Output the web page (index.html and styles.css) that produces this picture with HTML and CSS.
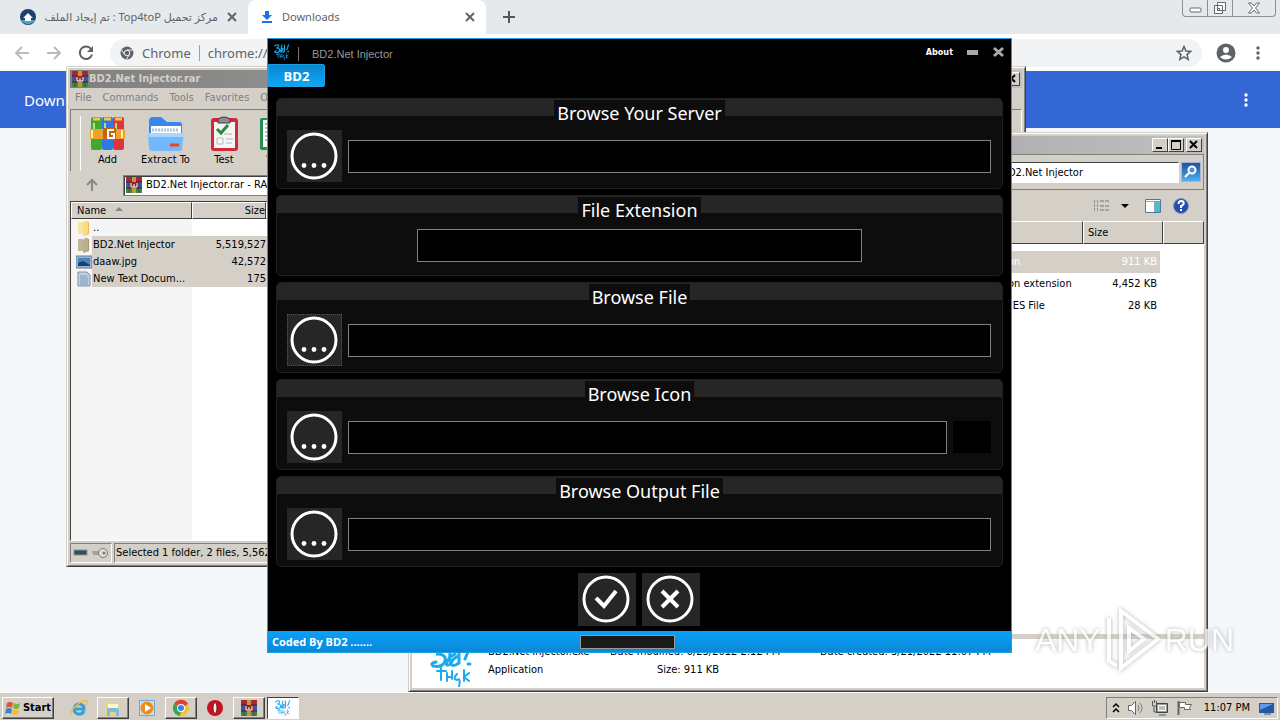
FILE: index.html
```
<!DOCTYPE html>
<html lang="en">
<head>
    <meta charset="UTF-8">
    <meta name="viewport" content="width=device-width, initial-scale=1.0">
    <title>BD2.Net Injector</title>
    <link rel="stylesheet" href="styles.css">
</head>
<body>
    <!-- shared icons -->
    <svg class="sprite" aria-hidden="true">
        <symbol id="rar" viewBox="0 0 16 16">
            <rect width="16" height="5" fill="#b3262e"/>
            <rect y="5" width="16" height="6" fill="#2c5fb5"/>
            <rect y="11" width="16" height="5" fill="#2c9140"/>
            <path d="M0 5h16M0 11h16" stroke="#381a30"/>
            <path d="M3 0v16M13 0v16" stroke="#73304c"/>
            <rect x="6" width="4" height="16" fill="#c7963c"/>
            <rect x="4" y="5" width="8" height="6" fill="#872626"/>
            <path d="M5 6v4h6V6M8 7v3" fill="none" stroke="#fff"/>
        </symbol>
        <symbol id="dots" viewBox="0 0 50 50">
            <circle cx="25" cy="25" r="22" fill="none" stroke="#fff" stroke-width="3"/>
            <circle cx="15" cy="34.500" r="2.400" fill="#fff"/>
            <circle cx="25" cy="34.500" r="2.400" fill="#fff"/>
            <circle cx="35" cy="34.500" r="2.400" fill="#fff"/>
        </symbol>
        <symbol id="bd" viewBox="0 0 44 44">
            <g fill="none" stroke="#1cacee" stroke-width="3" stroke-linecap="round">
                <path d="M2 5q12-6 11 1q-1 5-7 5q11 0 9 7q-2 7-12 5q-3-3 3-4M22 3q-4 9-1 18q-6 3-4-2q2-5 8-8M29 3v17q-7 5-8 0q3-6 8-7M40 2q-2 8-5 14M38 21h2"/>
                <path d="M7 28h9M11 25v12M17 30v8M17 34h5M22 28v8M27 31q-5 5 0 6q4-3 2 7M34 27v11M39 30l-5 4l5 4" stroke-width="2"/>
            </g>
        </symbol>
        <symbol id="folder" viewBox="0 0 16 16">
            <path d="M2 2h5v12H2z" fill="#f7e6a0"/>
            <path d="M7 3l6-1v12l-6 2z" fill="#e6bd51"/>
            <path d="M7 3l2-2h3v12l-5 3z" fill="#f8dc83"/>
        </symbol>
        <symbol id="menu-dots" viewBox="0 0 16 16">
            <circle cx="8" cy="3" r="1.7"/><circle cx="8" cy="8" r="1.7"/><circle cx="8" cy="13" r="1.7"/>
        </symbol>
        <symbol id="x" viewBox="0 0 12 12"><path d="M2 2l8 8M10 2l-8 8" fill="none" stroke="currentColor" stroke-width="2"/></symbol>
    </svg>

    <div class="desktop">
        <!-- chrome -->
        <div class="tabs">
            <div class="tab">
                <svg class="i16" viewBox="0 0 16 16"><circle cx="8" cy="8" r="8" fill="#1d416c"/><path d="M1 11a8 8 0 0 0 14 0z" fill="#4aa9bd"/><path d="M8 4l5 5h-2v3H5V9H3z" fill="#fff"/></svg>
                <span class="tab-name" dir="rtl">مركز تحميل Top4toP : تم إيجاد الملف</span>
                <button class="plain" aria-label="Close tab"><svg class="i12"><use href="#x"/></svg></button>
            </div>
            <div class="tab active">
                <svg class="i14" viewBox="0 0 14 14"><path d="M5 1h4v4h3L7 10 2 5h3zM2 11h10v2H2z" fill="#1a73e8"/></svg>
                <span class="tab-name">Downloads</span>
                <button class="plain" aria-label="Close tab"><svg class="i12"><use href="#x"/></svg></button>
            </div>
            <button class="plain new-tab" aria-label="New tab"><svg class="i14" viewBox="0 0 14 14"><path d="M7 1v12M1 7h12" stroke="#555" stroke-width="2"/></svg></button>
            <div class="frame-btns">
                <button class="plain" aria-label="Minimize"><svg class="i16" viewBox="0 0 16 16"><rect x="3" y="8" width="11" height="4" rx="1" fill="#fff" stroke="#667"/></svg></button>
                <button class="plain" aria-label="Restore"><svg class="i16" viewBox="0 0 16 16"><path d="M5.500 2.500h8v8h-8zM2.500 5.500h8v8h-8zM5.500 8.500h2v2h-2z" fill="#fff" stroke="#667"/></svg></button>
                <button class="plain wide" aria-label="Close"><svg class="i16" viewBox="0 0 16 16"><path d="M2.500 3h3l2.500 3 2.500-3h3l-4 5 4 5h-3L8 10l-2.500 3h-3l4-5z" fill="#fff" stroke="#667"/></svg></button>
            </div>
        </div>
        <div class="toolbar">
            <button class="plain pale" aria-label="Back"><svg class="i16" viewBox="0 0 16 16"><path d="M15 8H2M8 2L2 8l6 6" fill="none" stroke="currentColor" stroke-width="2"/></svg></button>
            <button class="plain pale" aria-label="Forward"><svg class="i16" viewBox="0 0 16 16"><path d="M1 8h13M8 2l6 6-6 6" fill="none" stroke="currentColor" stroke-width="2"/></svg></button>
            <button class="plain" aria-label="Reload"><svg class="i16" viewBox="0 0 16 16"><path d="M13 4a6.200 6.200 0 1 0 1 5.500" fill="none" stroke="currentColor" stroke-width="2"/><path d="M15 1v6H9z" fill="currentColor"/></svg></button>
            <div class="omnibox">
                <svg class="i14" viewBox="0 0 14 14"><circle cx="7" cy="7" r="6.500" fill="#5f6368"/><circle cx="7" cy="7" r="2.800" fill="#5f6368" stroke="#f1f3f4"/><path d="M7 4h6M4.500 8.500L1.600 4M9.500 8.500L6.500 13" stroke="#f1f3f4"/></svg>
                <span class="origin">Chrome</span>
                <span class="url">chrome://downloads</span>
                <svg class="i16" viewBox="0 0 16 16"><path d="M8 1.500l1.900 4.500 4.800.4-3.700 3.200 1.200 4.800L8 11.900l-4.200 2.500L5 9.600 1.300 6.400l4.800-.4z" fill="none" stroke="#5f6368" stroke-width="1.500"/></svg>
            </div>
            <svg class="i20" viewBox="0 0 20 20"><circle cx="10" cy="10" r="9.500" fill="#5f6368"/><circle cx="10" cy="7" r="3" fill="#fff"/><path d="M4 14q6-5 12 0q-6 5-12 0" fill="#fff"/></svg>
            <button class="plain" aria-label="Menu"><svg class="i16"><use href="#menu-dots"/></svg></button>
        </div>
        <div class="page-head">
            <span>Downloads</span>
            <svg class="i16"><use href="#menu-dots"/></svg>
        </div>
        <div class="page"></div>

        <!-- winrar -->
        <div class="win winrar">
            <div class="caption">
                <svg class="i16"><use href="#rar"/></svg>
                <b>BD2.Net Injector.rar</b>
                <button class="cap-btn" aria-label="Close"><svg class="i10" viewBox="0 0 10 10"><path d="M1 1l7 7M8 1L1 8" stroke="#000" stroke-width="2"/></svg></button>
            </div>
            <div class="menu"><span>File</span><span>Commands</span><span>Tools</span><span>Favorites</span><span>Options</span></div>
            <div class="rar-tools">
                <button class="tool w-add">
                    <svg viewBox="0 0 36 36"><rect x="1" y="1" width="11" height="33" rx="2" fill="#42a832"/><rect x="12" y="1" width="11" height="33" rx="2" fill="#2e7ae0"/><rect x="23" y="1" width="11" height="33" rx="2" fill="#e0343c"/><path d="M3 3h7M14 3h7M25 3h7" stroke="#f7c742" stroke-width="3"/><path d="M4 7v8M15 7v8M26 7v8" stroke="#a7e68e" stroke-width="2"/><path d="M0 13h35v10H0z" fill="#eba32c"/><path d="M2 14v8M32 14v8" stroke="#fff0b2" stroke-width="2"/><path d="M13 12h13v12H13z" fill="#c6650d"/><path d="M24 14h-6v8h6v-4h-3" fill="none" stroke="#fff" stroke-width="2"/></svg>
                    Add
                </button>
                <button class="tool w-ext">
                    <svg viewBox="0 0 36 36"><path d="M1 5q0-4 4-4h8l6 5h12q3 0 3 3v12H1z" fill="#3b86eb"/><path d="M3 10h30v12H3z" fill="#fff"/><path d="M4 14h27" stroke="#abc5e3" stroke-width="3" stroke-dasharray="2 1"/><path d="M0 17h36l-2 15q0 3-3 3H4q-3 0-3-3z" fill="#74b8fb"/><path d="M0 17h36v4H1z" fill="#a7d7ff"/><path d="M22 29h9" stroke="#e24a26" stroke-width="3"/></svg>
                    Extract To
                </button>
                <button class="tool w-test">
                    <svg viewBox="0 0 36 36"><rect x="5" y="2" width="27" height="33" rx="3" fill="#d1283c"/><path d="M8 6h21v26H8z" fill="#f5f5f5"/><path d="M12 3q6-4 12 0v4H12z" fill="#8a8d90" stroke="#5f3035"/><path d="M11 13l4 4 7-8" fill="none" stroke="#268c3c" stroke-width="3"/><path d="M18 18h8M20 23h7M20 27h6" stroke="#b2b2b2"/><path d="M11 22h6v6h-6z" fill="none" stroke="#bbb"/></svg>
                    Test
                </button>
                <button class="tool w-view">
                    <svg viewBox="0 0 36 36"><rect x="0" y="2" width="34" height="32" rx="2" fill="#258e4c"/><path d="M3 4h29v27H3z" fill="#fff"/><path d="M5 8h24M5 12h24M5 16h24M5 20h24M5 24h24" stroke="#b8bcc2" stroke-width="2"/></svg>
                    View
                </button>
            </div>
            <div class="rar-addr">
                <svg class="i14" viewBox="0 0 14 14"><path d="M7 13V3M2 7l5-5 5 5" fill="none" stroke="#888" stroke-width="2"/></svg>
                <div class="rar-path"><svg class="i16"><use href="#rar"/></svg>BD2.Net Injector.rar - RAR archive</div>
            </div>
            <div class="rar-list">
                <table>
                    <thead>
                        <tr><th class="c-name">Name <svg class="sort" viewBox="0 0 8 4"><path d="M0 4l4-4 4 4z" fill="#888"/></svg></th><th class="c-size">Size</th><th></th></tr>
                    </thead>
                    <tbody>
                        <tr><td><svg class="i16"><use href="#folder"/></svg><span>..</span></td><td></td><td></td></tr>
                        <tr class="sel"><td><svg class="i16 dim"><use href="#folder"/></svg><span>BD2.Net Injector</span></td><td>5,519,527</td><td></td></tr>
                        <tr class="sel"><td><svg class="i16" viewBox="0 0 16 16"><rect y="2" width="16" height="12" fill="#9cb5ce" stroke="#667e99"/><rect x="2" y="4" width="12" height="8" fill="#4a84bb"/><path d="M2 9l5-2 7 4v1H2z" fill="#17406f"/></svg><span>daaw.jpg</span></td><td>42,572</td><td></td></tr>
                        <tr class="sel"><td><svg class="i16" viewBox="0 0 16 16"><path d="M2 1h9l3 3v11H2z" fill="#bfd0e5" stroke="#8290a4"/><path d="M4 5h7M4 7h8M4 9h8M4 11h8M4 13h8" stroke="#8297b2"/></svg><span>New Text Docum...</span></td><td>175</td><td></td></tr>
                    </tbody>
                </table>
            </div>
            <div class="rar-status">
                <div class="cell"><svg class="keys" viewBox="0 0 36 12"><rect x="1" y="3" width="13" height="5" fill="#2e5154" stroke="#85969a"/><path d="M19 5h9M20 7h8" stroke="#777"/><circle cx="30" cy="6" r="4.500" fill="#ddd" stroke="#777"/><circle cx="31" cy="6" r="1.500" fill="#777"/></svg></div>
                <div class="cell grow">Selected 1 folder, 2 files, 5,562,274 bytes</div>
            </div>
        </div>

        <!-- explorer -->
        <div class="win explorer">
            <div class="caption">
                <button class="cap-btn first" aria-label="Minimize"><svg class="i10" viewBox="0 0 10 10"><path d="M1 8h6" stroke="#000" stroke-width="2"/></svg></button>
                <button class="cap-btn" aria-label="Maximize"><svg class="i10" viewBox="0 0 10 10"><path d="M.5 1h9v8.500h-9z" fill="none" stroke="#000"/><path d="M0 1h10" stroke="#000" stroke-width="2"/></svg></button>
                <button class="cap-btn gap" aria-label="Close"><svg class="i10" viewBox="0 0 10 10"><path d="M1 1l7 7M8 1L1 8" stroke="#000" stroke-width="2"/></svg></button>
            </div>
            <div class="ex-addr">
                <input class="search" type="text" aria-label="Search" value="Search BD2.Net Injector">
                <button class="go" aria-label="Search"><svg class="i16" viewBox="0 0 16 16"><circle cx="9" cy="6" r="3.500" fill="#4b91df" stroke="#fff" stroke-width="2"/><path d="M6 9l-4 4" stroke="#fff" stroke-width="2"/></svg></button>
            </div>
            <div class="ex-tools">
                <svg class="i16" viewBox="0 0 16 16"><path d="M1.500 2v12M4.500 2v12" stroke="#8a919b" stroke-dasharray="3 1"/><path d="M7 3h4M12 3h4M7 8h4M12 8h4M7 12h4M12 12h4" stroke="#777"/></svg>
                <svg class="caret" viewBox="0 0 8 4"><path d="M0 0h8L4 4z"/></svg>
                <svg class="i16 pane" viewBox="0 0 16 16"><path d="M.5 1.500h15v13H.5z" fill="#fff" stroke="#4c7ba2"/><path d="M10 3h5v11h-5z" fill="#58b8c4"/><path d="M1 3.500h9M9.500 4v10" stroke="#8ba9c2"/></svg>
                <svg class="i16" viewBox="0 0 16 16"><circle cx="8" cy="8" r="7.500" fill="#244eae" stroke="#8296bb"/><path d="M5.500 6q0-3 2.700-3 2.500 0 2.500 2.300Q10.700 7 8 8v2M8 11v2" fill="none" stroke="#fff" stroke-width="2"/></svg>
            </div>
            <div class="ex-view">
                <table class="ex-list">
                    <thead><tr><th class="e-type"></th><th class="e-size">Size</th><th class="e-end"></th></tr></thead>
                    <tbody>
                        <tr class="sel"><td><span>Application</span></td><td>911 KB</td></tr>
                        <tr><td><span>Application extension</span></td><td>4,452 KB</td></tr>
                        <tr><td><span>RESOURCES File</span></td><td>28 KB</td></tr>
                    </tbody>
                </table>
            </div>
            <div class="details">
                <svg class="i44"><use href="#bd"/></svg>
                <div><div>BD2.Net Injector.exe</div><div>Application</div></div>
                <div><div>Date modified: 6/23/2012 2:12 PM</div><div class="indent">Size: 911 KB</div></div>
                <div>Date created: 3/21/2022 11:07 PM</div>
            </div>
        </div>

        <!-- injector -->
        <div class="injector">
            <div class="in-title">
                <svg class="i16"><use href="#bd"/></svg>
                <span class="in-name">BD2.Net Injector</span>
                <button class="plain about">About</button>
                <button class="plain" aria-label="Minimize"><svg class="i12" viewBox="0 0 12 12"><path d="M0 4h11v5H0z" fill="#aaa"/></svg></button>
                <button class="plain" aria-label="Close"><svg class="i12" viewBox="0 0 12 12"><path d="M1 2l9 8M10 2L1 10" stroke="#aaa" stroke-width="3"/></svg></button>
            </div>
            <button class="in-tab">BD2</button>
            <form class="in-body">
                <div class="group">
                    <div class="g-head"><label for="server">Browse Your Server</label></div>
                    <div class="g-row"><button type="button" class="pick" aria-label="Browse"><svg><use href="#dots"/></svg></button><input id="server" type="text"></div>
                </div>
                <div class="group">
                    <div class="g-head"><label for="ext">File Extension</label></div>
                    <div class="g-row short"><input id="ext" type="text"></div>
                </div>
                <div class="group">
                    <div class="g-head"><label for="file">Browse File</label></div>
                    <div class="g-row"><button type="button" class="pick focused" aria-label="Browse"><svg><use href="#dots"/></svg></button><input id="file" type="text"></div>
                </div>
                <div class="group">
                    <div class="g-head"><label for="icon">Browse Icon</label></div>
                    <div class="g-row"><button type="button" class="pick" aria-label="Browse"><svg><use href="#dots"/></svg></button><input id="icon" type="text"><div class="preview"></div></div>
                </div>
                <div class="group">
                    <div class="g-head"><label for="out">Browse Output File</label></div>
                    <div class="g-row"><button type="button" class="pick" aria-label="Browse"><svg><use href="#dots"/></svg></button><input id="out" type="text"></div>
                </div>
                <div class="actions">
                    <button type="button" class="pick" aria-label="OK"><svg viewBox="0 0 50 50"><circle cx="25" cy="25" r="22" fill="none" stroke="#fff" stroke-width="3"/><path d="M15 24l8 8 12-15" fill="none" stroke="#fff" stroke-width="4"/></svg></button>
                    <button type="button" class="pick" aria-label="Cancel"><svg viewBox="0 0 50 50"><circle cx="25" cy="25" r="22" fill="none" stroke="#fff" stroke-width="3"/><path d="M17 17l16 16M33 17L17 33" fill="none" stroke="#fff" stroke-width="4"/></svg></button>
                </div>
            </form>
            <div class="in-foot"><b>Coded By BD2 .......</b><div class="bar"></div></div>
        </div>

        <div class="mark">
            <span>ANY</span>
            <svg viewBox="0 0 60 64"><path d="M18 3L55 31 18 60zM6 10v43l8 5M26 20v23l15-12z" fill="none" stroke="#fff" stroke-width="4"/></svg>
            <span>RUN</span>
        </div>

        <!-- taskbar -->
        <div class="taskbar">
            <button class="start"><svg class="i16" viewBox="0 0 16 16"><path d="M2 3q3-2 6 0L7 8Q4 6 1 8z" fill="#e3562b"/><path d="M9 3q3 2 6 0l-1 5q-3 2-6 0z" fill="#78b641"/><path d="M1 9q3-2 6 0l-1 5q-3-2-6 0z" fill="#3a83cf"/><path d="M8 9q3 2 6 0l-1 5q-3 2-6 0z" fill="#f4bd31"/></svg>Start</button>
            <button class="task flat" aria-label="Internet Explorer"><svg class="i18" viewBox="0 0 18 18"><path d="M14 12q-2 4-6 3-4-1-4-5 1-5 5-5 5 0 5 5H5" fill="none" stroke="#379ed9" stroke-width="3"/><path d="M1 16Q0 12 7 6t10-4q1 2-2 5" fill="none" stroke="#edbe3d" stroke-width="1.500"/></svg></button>
            <button class="task" aria-label="Explorer"><svg class="i18" viewBox="0 0 18 18"><path d="M1 2h7l1 2h7v12H1z" fill="#edd485"/><path d="M4 5h10v4H4z" fill="#fff8cf"/><path d="M3 17v-6q0-2 2-2h8q2 0 2 2v6h-3v-4H6v4z" fill="#7bbce6"/></svg></button>
            <button class="task flat" aria-label="Media Player"><svg class="i18" viewBox="0 0 18 18"><path d="M1.500 1.500h15v15h-15z" fill="#c8e2f5" stroke="#6ea6cf"/><circle cx="9" cy="9" r="6.500" fill="#f18a16"/><path d="M7 5l6 4-6 4z" fill="#fff"/></svg></button>
            <button class="task" aria-label="Chrome"><svg class="i18" viewBox="0 0 18 18"><circle cx="9" cy="9" r="8" fill="#f2c52f"/><path d="M9 9L2 5a8 8 0 0 1 14 0z" fill="#dd4436"/><path d="M9 9L2 5a8 8 0 0 0 6 12z" fill="#35a458"/><circle cx="9" cy="9" r="4" fill="#fff"/><circle cx="9" cy="9" r="3" fill="#3f80e6"/></svg></button>
            <button class="task flat" aria-label="Opera"><svg class="i18" viewBox="0 0 18 18"><ellipse cx="9" cy="9" rx="8" ry="8" fill="#c41423"/><ellipse cx="9" cy="9" rx="2" ry="5.500" fill="#eee" stroke="#801018"/></svg></button>
            <button class="task" aria-label="WinRAR"><svg class="i16"><use href="#rar"/></svg></button>
            <button class="task pressed" aria-label="BD2.Net Injector"><svg class="i16"><use href="#bd"/></svg></button>
            <div class="tray">
                <svg class="i10" viewBox="0 0 10 10"><path d="M2 4l3-3 3 3M2 9l3-3 3 3" fill="none" stroke="#000" stroke-width="1.500"/></svg>
                <svg class="i18" viewBox="0 0 18 18"><path d="M1.500 6.500h3l4-4v13l-4-4h-3z" fill="#fff" stroke="#666"/><path d="M11 6q2 3 0 6M13 4q4 5 0 10" fill="none" stroke="#777"/></svg>
                <svg class="i18" viewBox="0 0 18 18"><path d="M5.500 4.500h11v9h-11z" fill="#999" stroke="#444"/><path d="M7.500 6.500h7v5h-7z" fill="#bbb" stroke="#fff"/><path d="M8 16h7M3 8v5h3M1.500 2v5h4V2M3.500 1v3" fill="none" stroke="#555"/></svg>
                <svg class="i18" viewBox="0 0 18 18"><path d="M3.500 2v14" stroke="#666" stroke-width="2"/><path d="M4.500 3.500h6v2h6l-2 3 1 2h-6v-2h-5z" fill="#fff" stroke="#666"/></svg>
                <span class="clock">11:07 PM</span>
                <svg class="i16" viewBox="0 0 16 16"><path d="M0 3h15v10H0z" fill="#2458a8"/><path d="M1 4h13L1 10z" fill="#639be3"/><path d="M5 14h7" stroke="#456"/></svg>
            </div>
        </div>
    </div>
</body>
</html>
```
FILE: styles.css
```
* {
    box-sizing: border-box;
}
body {
    margin: 0;
    font: 11px/16px "DejaVu Sans Condensed", "DejaVu Sans", sans-serif;
    color: #000;
}
button, input {
    font: inherit;
    padding: 0;
    border-radius: 0;
}
svg {
    display: block;
    flex: none;
}
.sprite {
    position: absolute;
    width: 0;
    height: 0;
}
.i10 { width: 10px; height: 10px; }
.i12 { width: 12px; height: 12px; }
.i14 { width: 14px; height: 14px; }
.i16 { width: 16px; height: 16px; }
.i18 { width: 18px; height: 18px; }
.i20 { width: 20px; height: 20px; }
.i44 { width: 44px; height: 44px; }
.plain {
    border: 0;
    background: none;
    color: inherit;
}
.desktop {
    position: relative;
    display: flex;
    flex-direction: column;
    min-height: 100vh;
    overflow: hidden;
    background: #f5f8fb;
}

/* chrome */
.tabs {
    display: flex;
    height: 34px;
    background: #e5e9ec;
    color: #5f6368;
    font: 11px/16px "Noto Sans", "DejaVu Sans", sans-serif;
}
.tab {
    display: flex;
    align-items: center;
    gap: 8px;
    width: 248px;
    padding: 0 10px 0 20px;
    white-space: nowrap;
}
.tab.active {
    width: 238px;
    padding: 0 10px 0 12px;
    background: #fff;
    border-radius: 8px 8px 0 0;
}
.tab-name {
    flex: 1;
    min-width: 0;
}
.new-tab {
    padding: 0 16px;
}
.frame-btns {
    display: flex;
    height: 17px;
    margin: 0 4px 0 auto;
    border: 1px solid #8a9097;
    border-top: 0;
    border-radius: 0 0 4px 4px;
}
.frame-btns button {
    display: flex;
    justify-content: center;
    width: 25px;
    border-right: 1px solid #8a9097;
}
.frame-btns .wide {
    width: 42px;
    border: 0;
}
.toolbar {
    display: flex;
    align-items: center;
    gap: 14px;
    height: 37px;
    padding: 0 12px 0 14px;
    background: #fff;
    color: #5f6368;
    fill: #5f6368;
}
.toolbar .plain {
    width: 18px;
}
.toolbar .pale {
    color: #bbb;
}
.omnibox {
    display: flex;
    flex: 1;
    align-items: center;
    gap: 8px;
    height: 28px;
    padding: 0 10px;
    border-radius: 14px;
    background: #f1f3f4;
    font: 13px/20px "Noto Sans", sans-serif;
}
.url {
    flex: 1;
    padding-left: 8px;
    border-left: 1px solid #9aa0a6;
    line-height: 16px;
}
.page-head {
    display: flex;
    align-items: center;
    justify-content: space-between;
    height: 57px;
    padding: 0 26px 0 24px;
    background: #3367d6;
    color: #fff;
    fill: #fff;
    font: 15px/20px "Noto Sans", sans-serif;
}
.page {
    flex: 1;
}

/* classic windows */
.win {
    position: absolute;
    display: flex;
    flex-direction: column;
    padding: 3px;
    background: #d4d0c8;
    border: 1px solid #d4d0c8;
    border-right-color: #404040;
    border-bottom-color: #404040;
    box-shadow: inset 1px 1px #fff, inset -1px -1px #808080;
    white-space: nowrap;
}
.caption {
    display: flex;
    align-items: center;
    gap: 1px;
    height: 18px;
    padding: 0 2px;
    background: linear-gradient(90deg, #808080, #c0c0c0);
    color: #d4d0c8;
}
.cap-btn {
    display: flex;
    align-items: center;
    justify-content: center;
    width: 16px;
    height: 14px;
    background: #d4d0c8;
    border: 1px solid #fff;
    border-right-color: #404040;
    border-bottom-color: #404040;
}
.winrar .cap-btn, .cap-btn.first {
    margin-left: auto;
}
.cap-btn.gap {
    margin-left: 2px;
}
.winrar {
    left: 66px;
    right: 254px;
    top: 66px;
    bottom: 153px;
}
.menu {
    display: flex;
    gap: 11px;
    height: 21px;
    padding: 2px 5px;
    color: #808080;
}
.rar-tools {
    display: flex;
    height: 62px;
    padding: 6px 0 0 9px;
    border: 1px solid #fff;
    border-left-color: #808080;
    border-top-color: #808080;
    border-bottom: 0;
}
.tool {
    display: flex;
    flex-direction: column;
    align-items: center;
    border: 0;
    background: none;
}
.tool svg {
    width: 36px;
    height: 36px;
}
.w-add { width: 54px; border-left: 1px solid #fff; }
.w-ext { width: 63px; }
.w-test { width: 54px; }
.w-view { width: 54px; }
.rar-addr {
    display: flex;
    align-items: center;
    gap: 24px;
    height: 28px;
    padding: 0 4px 0 15px;
}
.rar-path {
    display: flex;
    flex: 1;
    align-items: center;
    gap: 4px;
    height: 21px;
    padding: 0 2px;
    background: #fff;
    border: 1px solid #808080;
    box-shadow: inset 1px 1px #404040;
}
.rar-list {
    flex: 1;
    margin-top: 2px;
    border: 1px solid #404040;
    border-right-color: #fff;
    border-bottom-color: #fff;
    background: linear-gradient(90deg, #f5f5f5 121px, #fff 121px);
}
table {
    border-collapse: separate;
    border-spacing: 0;
    table-layout: fixed;
    width: 100%;
}
th {
    font-weight: normal;
    text-align: left;
    background: #d4d0c8;
    border: 1px solid #fff;
    border-right-color: #404040;
    border-bottom-color: #404040;
}
td {
    padding: 0;
}
.rar-list th {
    height: 17px;
    padding: 0 5px;
    line-height: 15px;
}
.rar-list .c-name { width: 121px; }
.rar-list .c-size { width: 74px; padding: 0; text-align: right; }
.sort {
    display: inline-block;
    width: 8px;
    height: 4px;
    margin: 0 0 3px 6px;
}
.rar-list td {
    height: 17px;
    line-height: 17px;
    text-align: right;
}
.rar-list td:first-child {
    display: flex;
    align-items: center;
    padding-left: 5px;
}
.rar-list td:first-child span {
    flex: 1;
    padding-left: 1px;
    text-align: left;
}
.rar-list .sel td:first-child span, .rar-list .sel td + td {
    background: #d4d0c8;
}
.dim {
    filter: saturate(.5) brightness(.8);
}
.rar-status {
    display: flex;
    gap: 2px;
    height: 22px;
    padding-top: 2px;
}
.cell {
    display: flex;
    align-items: center;
    padding: 0 1px;
    border: 1px solid #808080;
    border-right-color: #fff;
    border-bottom-color: #fff;
}
.cell.grow { flex: 1; }
.keys { width: 38px; height: 12px; }

.explorer {
    left: 408px;
    right: 72px;
    top: 132px;
    bottom: 28px;
}
.explorer .cap-btn {
    flex: none;
}
.explorer .caption {
    gap: 0;
}
.ex-addr {
    display: flex;
    justify-content: flex-end;
    align-items: center;
    gap: 2px;
    height: 36px;
    padding-right: 2px;
    border: 1px solid #808080;
    border-left: 0;
}
.search {
    width: 230px;
    height: 21px;
    padding-left: 14px;
    border: 1px solid #fff;
    border-top-color: #404040;
    background: #fff;
}
.go {
    display: flex;
    align-items: center;
    justify-content: center;
    width: 20px;
    height: 20px;
    background: linear-gradient(#234ca2, #4bb2ee);
    border: 1px solid #a4b8d6;
}
.ex-tools {
    display: flex;
    align-items: center;
    justify-content: flex-end;
    gap: 12px;
    height: 31px;
    padding-right: 15px;
}
.caret { width: 8px; height: 4px; }
.pane { margin-left: 4px; }
.ex-view {
    flex: 1;
    background: #fff;
}
.ex-list th {
    height: 23px;
    padding: 0 4px;
}
.ex-list .e-size { width: 80px; }
.ex-list .e-end { width: 41px; }
.ex-list tbody::before {
    content: "";
    display: block;
    height: 7px;
}
.ex-list td {
    height: 22px;
    padding: 0 8px 0 0;
    text-align: right;
}
.ex-list td + td {
    padding-right: 3px;
    border-right: 3px solid #fff;
}
.ex-list td span {
    display: inline-block;
    width: 110px;
    text-align: left;
}
.ex-list .sel td {
    background: #d4d0c8;
    color: #fff;
}
.details {
    display: grid;
    grid-template-columns: 44px 108px 196px 1fr;
    gap: 14px;
    padding: 4px 18px 1px;
    background: #fff;
    border-top: 5px solid #d4d0c8;
    line-height: 18px;
}
.indent {
    padding-left: 47px;
}

/* injector */
.injector {
    position: absolute;
    left: 267px;
    right: 268px;
    top: 38px;
    background: #000;
    border: 1px solid #1ba1e2;
    color: #fff;
}
.in-title {
    display: flex;
    align-items: center;
    gap: 14px;
    height: 25px;
    padding: 0 6px;
}
.in-name {
    flex: 1;
    margin: 4px 0 0 -6px;
    padding-left: 13px;
    border-left: 1px solid #777;
    color: #999;
    font: 11px/14px "Liberation Sans", sans-serif;
}
.about {
    font: bold 9px/14px "DejaVu Sans Condensed", "DejaVu Sans", sans-serif;
}
.in-tab {
    display: block;
    width: 57px;
    height: 23px;
    background: linear-gradient(#0a86d2, #12a5f2);
    border: 1px solid #1ba1e2;
    border-radius: 0 2px 2px 0;
    color: #fff;
    font: bold 13px/20px "Open Sans", "Noto Sans", sans-serif;
}
.in-body {
    display: flex;
    flex-direction: column;
    gap: 6px;
    padding: 11px 8px 5px;
}
.group {
    background: #0d0d0d;
    border: 1px solid #202020;
    border-radius: 5px;
    overflow: hidden;
}
.g-head {
    display: flex;
    justify-content: center;
    height: 17px;
    background: #262626;
}
.g-head label {
    height: 28px;
    padding: 0 3px;
    background: #0d0d0d;
    border-top: 1px solid #262626;
    font: 18px/26px "Noto Sans", "Open Sans", sans-serif;
}
.g-row {
    display: flex;
    align-items: center;
    gap: 6px;
    padding: 14px 11px 6px 10px;
}
.g-row input {
    flex: 1;
    min-width: 0;
    height: 33px;
    padding: 0 6px;
    background: #000;
    border: 1px solid #808080;
    color: #fff;
}
.g-row.short {
    padding: 16px 140px 13px;
}
.pick {
    display: flex;
    align-items: center;
    justify-content: center;
    width: 55px;
    height: 52px;
    padding: 0 1px 1px 0;
    border: 0;
    background: #262626;
}
.pick svg {
    width: 50px;
    height: 50px;
}
.pick.focused {
    outline: 1px dotted #555;
    outline-offset: -1px;
}
.preview {
    width: 38px;
    height: 32px;
    background: #000;
}
.actions {
    display: flex;
    justify-content: center;
    gap: 6px;
    padding-right: 2px;
}
.actions .pick {
    width: 58px;
    height: 53px;
}
.in-foot {
    display: flex;
    align-items: center;
    height: 21px;
    padding-left: 4px;
    background: linear-gradient(#0aa0fa, #0a88d6);
}
.in-foot b {
    flex: 0 0 308px;
    font: bold 11px/16px "Open Sans", "Noto Sans", sans-serif;
}
.bar {
    width: 95px;
    height: 14px;
    background: #1a1a1a;
    border: 1px solid #999;
}

/* watermark */
.mark {
    position: absolute;
    right: 46px;
    bottom: 48px;
    display: flex;
    align-items: center;
    gap: 2px;
    color: #fff;
    font: 32px/60px "Liberation Sans", sans-serif;
    filter: drop-shadow(0 0 2px #999);
    opacity: .75;
}
.mark svg {
    width: 60px;
    height: 64px;
}

/* taskbar */
.taskbar {
    display: flex;
    align-items: center;
    gap: 2px;
    height: 28px;
    padding: 2px 2px 0;
    background: #d4d0c8;
    border-top: 1px solid #fff;
}
.start, .task {
    display: flex;
    align-items: center;
    justify-content: center;
    height: 22px;
    background: #d4d0c8;
    border: 1px solid #fff;
    border-right-color: #404040;
    border-bottom-color: #404040;
    box-shadow: inset -1px -1px #808080;
}
.start {
    gap: 2px;
    width: 52px;
    margin-right: 7px;
    font-weight: bold;
}
.task {
    width: 32px;
}
.task.flat {
    border-color: transparent;
    box-shadow: none;
}
.task.pressed {
    background: #fff;
    border-color: #404040 #fff #fff #404040;
    box-shadow: none;
}
.tray {
    display: flex;
    align-items: center;
    gap: 6px;
    height: 22px;
    margin-left: auto;
    padding: 0 2px 0 4px;
    border: 1px solid #808080;
    border-right-color: #fff;
    border-bottom-color: #fff;
}
.clock {
    padding: 0 3px 0 5px;
}
```
